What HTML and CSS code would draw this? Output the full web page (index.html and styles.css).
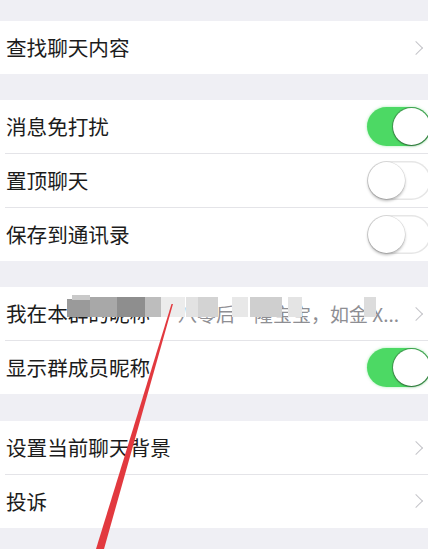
FILE: index.html
```html
<!DOCTYPE html>
<html lang="zh-CN">
<head>
<meta charset="utf-8">
<title>聊天信息</title>
<link rel="stylesheet" href="styles.css">
</head>
<body>
<div class="page">
  <div class="group g1">
    <div class="row"><span class="label">查找聊天内容</span><span class="chev"></span></div>
  </div>
  <div class="group g2">
    <div class="row"><span class="label">消息免打扰</span><span class="switch on"><span class="knob"></span></span></div>
    <div class="row"><span class="label">置顶聊天</span><span class="switch"><span class="knob"></span></span></div>
    <div class="row"><span class="label">保存到通讯录</span><span class="switch"><span class="knob"></span></span></div>
  </div>
  <div class="group g3">
    <div class="row nick">
      <span class="label">我在本群的昵称</span>
      <span class="value">八零后·隆宝宝，如金 X...</span>
      <span class="chev"></span>
      <div class="mosaic">
        <i class="m1"></i><i class="m2"></i><i class="m3"></i><i class="m4"></i><i class="m5"></i>
        <i class="m6"></i><i class="m7"></i><i class="m8"></i><i class="m9"></i><i class="m10"></i>
        <i class="m11"></i><i class="m12"></i>
      </div>
    </div>
    <div class="row"><span class="label">显示群成员昵称</span><span class="switch on"><span class="knob"></span></span></div>
  </div>
  <div class="group g4">
    <div class="row"><span class="label">设置当前聊天背景</span><span class="chev"></span></div>
    <div class="row"><span class="label">投诉</span><span class="chev"></span></div>
  </div>
  <svg class="arrow" width="428" height="549" viewBox="0 0 428 549">
    <polygon points="171.5,304 173,304 104,549 96,549" fill="#e2393f"/>
  </svg>
</div>
</body>
</html>
```
FILE: styles.css
```css
html, body {
  margin: 0;
  padding: 0;
  background: #efeff4;
}
.page {
  position: relative;
  width: 428px;
  height: 549px;
  overflow: hidden;
  padding-top: 21px;
  box-sizing: border-box;
  font-family: "Noto Sans CJK SC", "Noto Sans", sans-serif;
  color: #1c1c1c;
}
.group {
  background: #fff;
  display: flex;
  flex-direction: column;
}
.g2 { margin-top: 26px; }
.g3 { margin-top: 26px; }
.g4 { margin-top: 27px; }
.row {
  position: relative;
  height: 53px;
  display: flex;
  align-items: center;
  padding-left: 6px;
  overflow: hidden;
}
.row + .row::before {
  content: "";
  position: absolute;
  left: 5px;
  right: 0;
  top: 0;
  height: 1px;
  background: #e4e4e8;
}
.row + .row { height: 54px; }
.label {
  font-size: 20.6px;
  line-height: 1;
  flex: 1;
  white-space: nowrap;
}
.chev {
  width: 9px;
  height: 9px;
  border-top: 1.6px solid #c4c4c9;
  border-right: 1.6px solid #c4c4c9;
  transform: rotate(45deg);
  margin-right: 7px;
  flex: none;
}
.switch {
  flex: none;
  width: 64px;
  height: 39px;
  border-radius: 20px;
  background: #fff;
  box-shadow: inset 0 0 0 1.5px #e6e6e6;
  margin-right: -3px;
  position: relative;
}
.switch .knob {
  position: absolute;
  top: 1px;
  left: 1px;
  width: 37px;
  height: 37px;
  border-radius: 50%;
  background: #fff;
  box-shadow: 0 2px 3px rgba(0,0,0,0.28), 0 0 0 0.5px rgba(0,0,0,0.12);
}
.switch.on {
  background: #4cd964;
  box-shadow: 0 0 3px rgba(76,217,100,0.5);
}
.switch.on .knob {
  left: 26px;
  box-shadow: 0 1px 2px rgba(0,0,0,0.35), 0 0 0 1px rgba(60,120,70,0.55);
}
.nick .value {
  flex: none;
  font-size: 19px;
  line-height: 1;
  color: #8e8e93;
  white-space: nowrap;
  margin-right: 12px;
}
.mosaic {
  position: absolute;
  left: 0;
  top: 0;
  width: 428px;
  height: 53px;
}
.mosaic i {
  position: absolute;
  display: block;
  top: 10px;
  height: 20px;
}
.m1 { left: 67px; width: 24px; background: #9a9a9a; top: 12px !important; height: 18px !important; }
.m2 { left: 72px; width: 18px; background: #c9c9c9; top: 8px !important; height: 5px !important; }
.m3 { left: 90px; width: 28px; background: #a8a8a8; }
.m4 { left: 117px; width: 28px; background: #8e8e8e; }
.m5 { left: 145px; width: 16px; background: #bdbdbd; }
.m6 { left: 161px; width: 24px; background: #ececec; }
.m7 { left: 186px; width: 12px; background: #e2e2e2; }
.m8 { left: 198px; width: 20px; background: #d3d3d3; }
.m9 { left: 232px; width: 16px; background: #e8e8e8; }
.m10 { left: 250px; width: 32px; background: #cfcfcf; }
.m11 { left: 288px; width: 14px; background: #e4e4e4; }
.m12 { left: 364px; width: 12px; background: #dcdcdc; }
.arrow {
  position: absolute;
  left: 0;
  top: 0;
  pointer-events: none;
}
```
